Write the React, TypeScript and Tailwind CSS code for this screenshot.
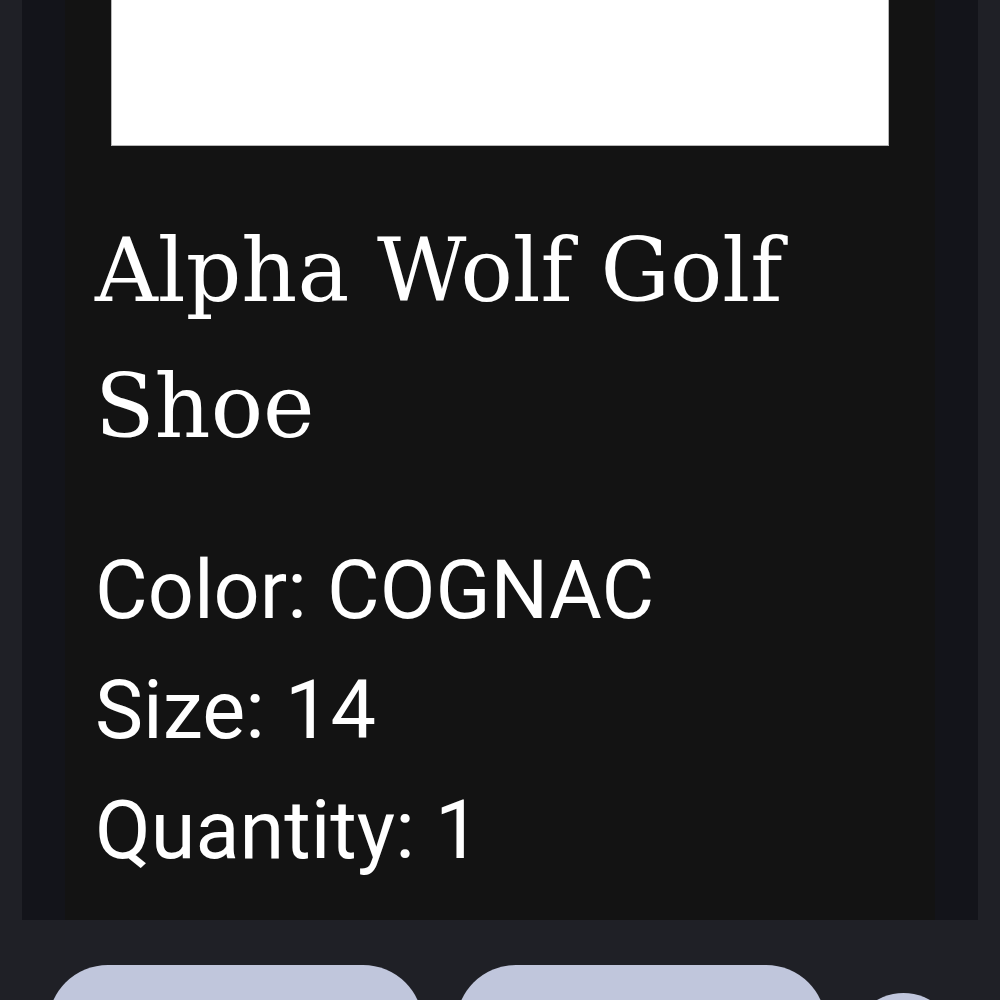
import React from 'react';

const details = [
  { label: 'Color', value: 'COGNAC' },
  { label: 'Size', value: '14' },
  { label: 'Quantity', value: '1' },
];

export default function App() {
  return (
    <div className="w-[1000px] h-[1000px] overflow-hidden bg-[#1f2026]">
      {/* Order item card */}
      <div className="mx-[22px] px-[43px] bg-[#13141a]">
        <div className="bg-[#131313] px-[30px] pb-[29px]">
          {/* Product image placeholder */}
          <div className="mx-auto w-[778px] h-[146px] bg-white border border-t-0 border-[#b8b8b8]" />

          <h1
            className="mt-[57px] text-white text-[87px] leading-[136px] font-normal"
            style={{ fontFamily: '"DejaVu Serif", serif' }}
          >
            Alpha Wolf Golf Shoe
          </h1>

          <div className="mt-[56px] text-white text-[81px] leading-[120px] font-['Roboto',sans-serif]">
            {details.map((d) => (
              <p key={d.label}>
                {d.label}: {d.value}
              </p>
            ))}
          </div>
        </div>
      </div>

      {/* Action buttons */}
      <div className="mt-[45px] flex items-start pl-[48px]">
        <button className="w-[375px] h-[120px] rounded-full bg-[#c0c6dc]" />
        <button className="ml-[33px] w-[370px] h-[120px] rounded-full bg-[#c0c6dc]" />
        <button className="ml-[24px] mt-[28px] w-[107px] h-[107px] rounded-full bg-[#c0c6dc]" />
      </div>
    </div>
  );
}
